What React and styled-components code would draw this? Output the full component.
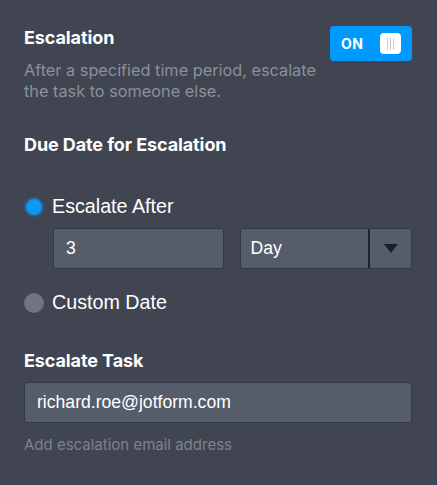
import React from "react";
import styled, { createGlobalStyle } from "styled-components";

const Global = createGlobalStyle`
  html, body { margin: 0; padding: 0; background: #404551; }
  * { box-sizing: border-box; }
`;

const Panel = styled.div`
  width: 437px;
  height: 485px;
  background: #404551;
  padding: 26px 25px 0 24px;
  font-family: Inter, "Noto Sans", sans-serif;
  color: #fff;
`;

const HeaderRow = styled.div`
  display: flex;
  justify-content: space-between;
  align-items: flex-start;
`;

const Title = styled.div`
  font-family: Inter, sans-serif;
  font-weight: 700;
  font-size: 18px;
  line-height: 24px;
  margin-top: ${(p) => p.$mt || 0}px;
  letter-spacing: -0.1px;
`;

const Desc = styled.div`
  color: #8b909c;
  font-size: 16.3px;
  line-height: 21px;
  margin-top: 10px;
  width: 300px;
  white-space: nowrap;
`;

const Toggle = styled.div`
  width: 82px;
  height: 35px;
  border-radius: 4px;
  background: #0099ff;
  display: flex;
  align-items: center;
  justify-content: space-between;
  padding: 0 11px 0 11px;
`;

const ToggleText = styled.span`
  font-weight: 700;
  font-size: 14px;
  color: #fff;
  letter-spacing: 0.5px;
`;

const Knob = styled.div`
  width: 21px;
  height: 21px;
  background: #fff;
  border-radius: 4px;
  display: flex;
  justify-content: center;
  align-items: center;
  gap: 2px;
`;

const KnobLine = styled.div`
  width: 1px;
  height: 12px;
  background: #c9ccd3;
`;

const RadioRow = styled.div`
  display: flex;
  align-items: center;
  gap: 8px;
  height: 21px;
  margin-top: ${(p) => p.$mt}px;
  font-family: "Liberation Sans", Arial, sans-serif;
  font-size: 19.7px;
  color: #fff;
`;

const RadioDot = styled.div`
  width: 20px;
  height: 20px;
  border-radius: 50%;
  flex: none;
  background: ${(p) => (p.$on ? "#0a9bf5" : "#6e7480")};
  border: ${(p) => (p.$on ? "2px solid #2b5d8e" : "none")};
  box-shadow: ${(p) => (p.$on ? "inset 0 0 0 1px #1a8ae0" : "none")};
`;

const InputsRow = styled.div`
  display: flex;
  gap: 16px;
  margin: 11px 0 0 29px;
`;

const Field = styled.div`
  height: 41px;
  width: ${(p) => (p.$w ? p.$w + "px" : "100%")};
  margin-top: ${(p) => p.$mt || 0}px;
  background: #555d6b;
  border: 1px solid #353a45;
  border-radius: 3px;
  display: flex;
  align-items: center;
  padding-left: 12px;
  font-family: "Liberation Sans", Arial, sans-serif;
  font-size: 17.6px;
  color: #fff;
`;

const Select = styled.div`
  height: 41px;
  width: 173px;
  background: #555d6b;
  border: 1px solid #353a45;
  border-radius: 3px;
  display: flex;
  font-family: "Liberation Sans", Arial, sans-serif;
  font-size: 17.6px;
  color: #fff;
`;

const SelectValue = styled.div`
  flex: 1;
  display: flex;
  align-items: center;
  padding-left: 10px;
  border-right: 2px solid #1f232b;
`;

const SelectArrow = styled.div`
  width: 41px;
  display: flex;
  align-items: center;
  justify-content: center;
`;

const Help = styled.div`
  color: #7c8290;
  font-size: 15px;
  line-height: 18px;
  margin-top: 13px;
`;

export default function App() {
  return (
    <>
      <Global />
      <Panel>
        <HeaderRow>
          <div>
            <Title>Escalation</Title>
            <Desc>
              After a specified time period, escalate
              <br />
              the task to someone else.
            </Desc>
          </div>
          <Toggle>
            <ToggleText>ON</ToggleText>
            <Knob>
              <KnobLine />
              <KnobLine />
              <KnobLine />
            </Knob>
          </Toggle>
        </HeaderRow>
        <Title $mt={31}>Due Date for Escalation</Title>
        <RadioRow $mt={39}>
          <RadioDot $on />
          Escalate After
        </RadioRow>
        <InputsRow>
          <Field $w={171}>3</Field>
          <Select>
            <SelectValue>Day</SelectValue>
            <SelectArrow>
              <svg width="14" height="9" viewBox="0 0 14 9">
                <path d="M0 0 H14 L7 9 Z" fill="#1c1f26" />
              </svg>
            </SelectArrow>
          </Select>
        </InputsRow>
        <RadioRow $mt={23}>
          <RadioDot />
          Custom Date
        </RadioRow>
        <Title $mt={36}>Escalate Task</Title>
        <Field $mt={9}>richard.roe@jotform.com</Field>
        <Help>Add escalation email address</Help>
      </Panel>
    </>
  );
}
